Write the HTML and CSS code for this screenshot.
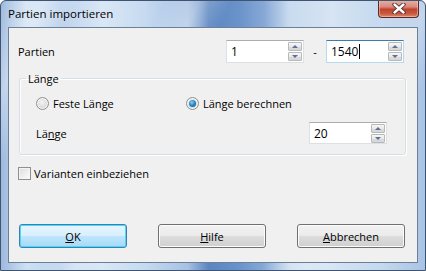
FILE: index.html
```html
<!DOCTYPE html>
<html>
<head>
<meta charset="utf-8">
<link rel="stylesheet" href="styles.css">
</head>
<body>
<div class="window">
  <div class="titlebar">
    <span class="title">Partien importieren</span>
    <div class="close">
      <svg width="16" height="11" viewBox="0 0 16 11">
        <path d="M3.5 1.5 L12.5 9.5 M12.5 1.5 L3.5 9.5" stroke="#4a2a2a" stroke-width="4.2" stroke-linecap="round" fill="none"/>
        <path d="M3.5 1.5 L12.5 9.5 M12.5 1.5 L3.5 9.5" stroke="#ffffff" stroke-width="2.4" stroke-linecap="round" fill="none"/>
      </svg>
    </div>
  </div>
  <div class="middle">
    <div class="client">
      <div class="range-row">
        <span class="label">Partien</span>
        <div class="spin">
          <span class="value">1</span>
          <div class="spinbtns"><span class="sb up"></span><span class="sb down"></span></div>
        </div>
        <span class="dash">-</span>
        <div class="spin focus">
          <span class="value">1540<span class="caret"></span></span>
          <div class="spinbtns"><span class="sb up"></span><span class="sb down"></span></div>
        </div>
      </div>
      <fieldset class="group">
        <legend>Länge</legend>
        <div class="radios">
          <label class="radio"><span class="dot"></span>Feste Länge</label>
          <label class="radio checked"><span class="dot"></span>Länge berechnen</label>
        </div>
        <div class="len-row">
          <span class="label">Lä<u>n</u>ge</span>
          <div class="spin">
            <span class="value">20</span>
            <div class="spinbtns"><span class="sb up"></span><span class="sb down"></span></div>
          </div>
        </div>
      </fieldset>
      <label class="check"><span class="box"></span>Varianten einbeziehen</label>
      <div class="buttons">
        <button class="btn default"><u>O</u>K</button>
        <button class="btn"><u>H</u>ilfe</button>
        <button class="btn"><u>A</u>bbrechen</button>
      </div>
    </div>
  </div>
</div>
</body>
</html>
```

FILE: styles.css
```css
html, body {
  margin: 0;
  padding: 0;
  background: #fff;
}
.window {
  width: 426px;
  height: 271px;
  box-sizing: border-box;
  border: 1px solid #3e5470;
  border-radius: 6px 6px 0 0;
  overflow: hidden;
  display: flex;
  flex-direction: column;
  font-family: "Open Sans", "Noto Sans", sans-serif;
  font-size: 11px;
  color: #000;
  background:
    linear-gradient(115deg, rgba(255,255,255,0) 0%, rgba(255,255,255,0.35) 8%, rgba(255,255,255,0) 14%, rgba(255,255,255,0) 30%, rgba(255,255,255,0.3) 36%, rgba(255,255,255,0) 42%, rgba(255,255,255,0) 70%, rgba(255,255,255,0.3) 78%, rgba(255,255,255,0) 84%),
    linear-gradient(90deg, #9db9de 0%, #cfe0f2 6%, #bcd2ec 14%, #d9e7f5 24%, #c6daf0 34%, #a7c1e3 44%, #5a85c0 49%, #6a93ca 56%, #86a8d6 62%, #c9dbef 68%, #d6e4f3 78%, #c4d8ee 90%, #a9c3e4 100%);
}
.titlebar {
  height: 26px;
  flex: none;
  display: flex;
  align-items: flex-start;
  padding-left: 7px;
}
.title {
  margin-top: 5px;
  font-size: 11.5px;
  line-height: 16px;
  color: #000;
}
.close {
  margin-left: auto;
  margin-right: 6px;
  margin-top: -1px;
  width: 41px;
  height: 18px;
  box-sizing: border-box;
  border: 1px solid #5b2a27;
  border-top: none;
  border-radius: 0 0 4px 4px;
  background: linear-gradient(180deg, #e8b3a8 0%, #d88a7c 40%, #c1412f 55%, #c85a3f 80%, #d98a6c 100%);
  box-shadow: inset 0 0 0 1px rgba(255,220,210,0.45);
  display: flex;
  align-items: center;
  justify-content: center;
}
.middle {
  flex: 1;
  display: flex;
  padding: 0 7px 7px 7px;
}
.client {
  flex: 1;
  border: 1px solid #6b7f96;
  background: #f0f0f0;
  display: flex;
  flex-direction: column;
}
.range-row {
  display: flex;
  align-items: center;
  margin-top: 12px;
  padding: 0 13px 0 9px;
}
.range-row .label {
  flex: 1;
}
.dash {
  width: 22px;
  text-align: center;
}
.spin {
  width: 78px;
  height: 23px;
  box-sizing: border-box;
  border: 1px solid #dbdfe6;
  border-top-color: #abadb3;
  background: #fff;
  display: flex;
  align-items: center;
  padding: 0 1px 0 4px;
}
.spin.focus {
  border-color: #b7d9ed;
  border-top-color: #3d7bad;
}
.spin .value {
  flex: 1;
  font-size: 12px;
  display: flex;
  align-items: center;
}
.caret {
  display: inline-block;
  width: 1px;
  height: 15px;
  background: #000;
  margin-left: 1px;
}
.spinbtns {
  width: 14px;
  height: 19px;
  display: flex;
  flex-direction: column;
  gap: 1px;
}
.sb {
  flex: 1;
  box-sizing: border-box;
  border: 1px solid #b9b9b9;
  border-radius: 1px;
  background: linear-gradient(180deg, #f6f6f6 0%, #e9e9e9 50%, #dcdcdc 51%, #d6d6d6 100%);
  display: flex;
  align-items: center;
  justify-content: center;
}
.sb::after {
  content: "";
  width: 0;
  height: 0;
  border-left: 3.5px solid transparent;
  border-right: 3.5px solid transparent;
}
.sb.up::after {
  border-bottom: 3px solid #5c6f9a;
}
.sb.down::after {
  border-top: 3px solid #5c6f9a;
}
.group {
  margin: 8px 11px 0 10px;
  padding: 9px 18px 10px 16px;
  border: 1px solid #d5dfe5;
  border-radius: 3px;
  box-shadow: 1px 1px 0 #fff, inset 1px 1px 0 #fff;
  min-width: 0;
}
.group legend {
  padding: 0 2px;
  margin-left: -10px;
  line-height: 15px;
}
.radios {
  display: flex;
  height: 16px;
  align-items: center;
}
.radio {
  display: flex;
  align-items: center;
  gap: 4px;
}
.radio:first-child {
  width: 150px;
}
.dot {
  width: 13px;
  height: 13px;
  box-sizing: border-box;
  border-radius: 50%;
  border: 1px solid #8f9091;
  background: radial-gradient(circle at 45% 40%, #f4f4f4 0%, #dcdcdc 55%, #c9c9c9 100%);
  box-shadow: inset 0 0 0 1px #f7f7f7;
  display: flex;
  align-items: center;
  justify-content: center;
}
.radio.checked .dot::after {
  content: "";
  width: 7px;
  height: 7px;
  border-radius: 50%;
  background: radial-gradient(circle at 40% 35%, #8ed1f5 0%, #2a8cc6 45%, #0d4f86 100%);
}
.len-row {
  display: flex;
  align-items: center;
  margin-top: 11px;
}
.len-row .label {
  flex: 1;
}
.len-row .spin {
  height: 22px;
}
.check {
  display: flex;
  align-items: center;
  gap: 3px;
  margin: 11px 0 0 9px;
  height: 15px;
}
.box {
  width: 13px;
  height: 13px;
  box-sizing: border-box;
  border: 1px solid #8f8f8f;
  background: linear-gradient(135deg, #dcdcdc 0%, #f0f0f0 60%, #fbfbfb 100%);
  box-shadow: inset 0 0 0 1px #f4f4f4;
}
.buttons {
  margin-top: auto;
  margin-bottom: 14px;
  display: flex;
  justify-content: space-between;
  padding: 0 12px 0 10px;
}
.btn {
  width: 108px;
  height: 24px;
  border: 1px solid #707070;
  border-radius: 3px;
  background: linear-gradient(180deg, #f2f2f2 0%, #ebebeb 49%, #dddddd 50%, #cfcfcf 100%);
  box-shadow: inset 0 0 0 1px #fcfcfc;
  font-family: "Open Sans", "Noto Sans", sans-serif;
  font-size: 11px;
  color: #000;
  padding: 0;
}
.btn.default {
  border-color: #3c7fb1;
  background: linear-gradient(180deg, #e7f5fd 0%, #d8effc 49%, #bee6fd 50%, #a7d9f5 100%);
  box-shadow: inset 0 0 0 1px #48d8fb;
}
```
